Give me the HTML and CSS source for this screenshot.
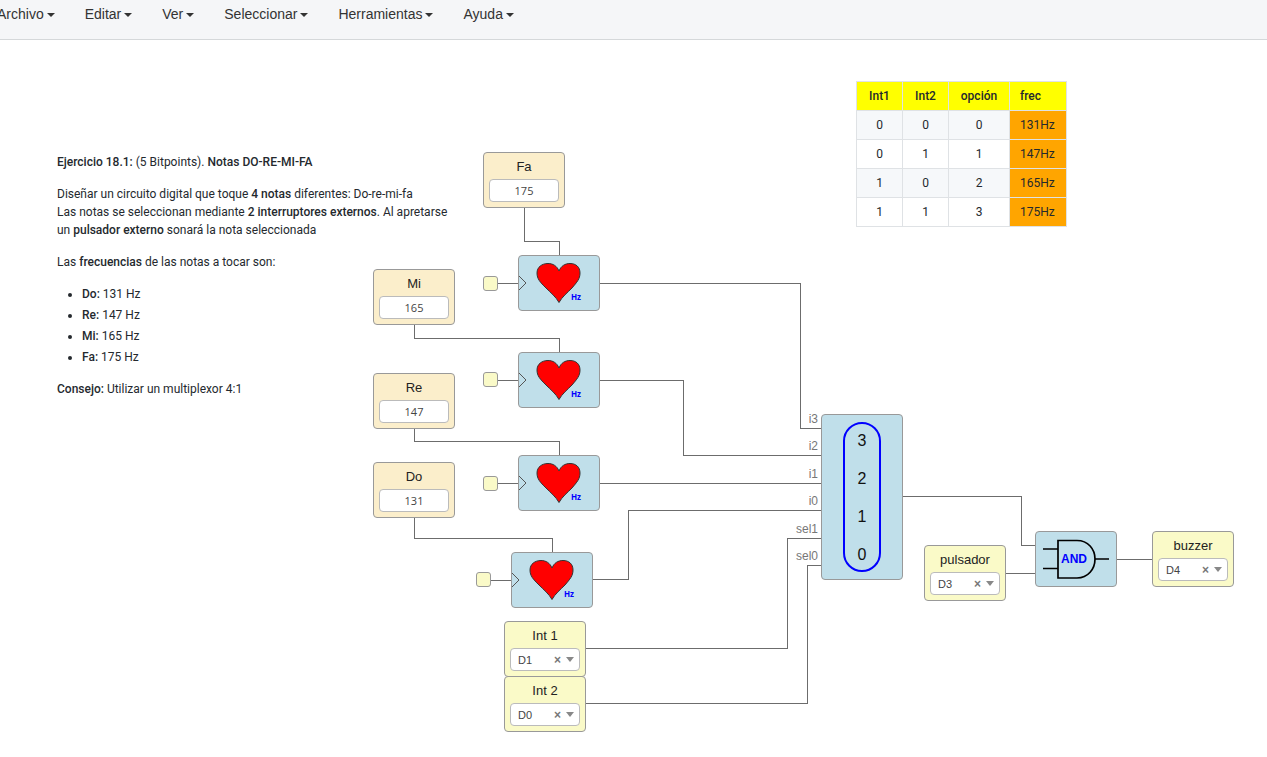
FILE: index.html
```
<!DOCTYPE html>
<html lang="es">
<head>
<meta charset="utf-8">
<title>Ejercicio 18.1</title>
<link rel="stylesheet" href="styles.css">
</head>
<body>
<header class="topbar">
  <nav class="menu">
    <button type="button" class="menu-item">Archivo<span class="caret"></span></button>
    <button type="button" class="menu-item">Editar<span class="caret"></span></button>
    <button type="button" class="menu-item">Ver<span class="caret"></span></button>
    <button type="button" class="menu-item">Seleccionar<span class="caret"></span></button>
    <button type="button" class="menu-item">Herramientas<span class="caret"></span></button>
    <button type="button" class="menu-item">Ayuda<span class="caret"></span></button>
  </nav>
</header>

<svg class="defs" width="0" height="0" aria-hidden="true">
  <symbol id="heart" viewBox="0 0 80 54">
    <path d="M0 20 L7 27 L0 34" fill="none" stroke="#555"/>
    <path d="M40 46.500 C37 41 32 37 27 32 C21 26 18 23 18 17 C18 11 23 7.500 29 7.500 C34 7.500 38 10 40 15 C42 10 46 7.500 51 7.500 C57 7.500 61 11 61 17 C61 23 58 26 53 32 C48 37 43 41 40 46.500 Z" fill="#f00" stroke="#333"/>
  </symbol>
</svg>

<main class="canvas">
  <svg class="wires" aria-hidden="true">
    <g class="wire">
      <path d="M524 168V201H559V215"/>
      <path d="M414 285V298H559V312"/>
      <path d="M414 389V401H559V415"/>
      <path d="M414 478V498H552V512"/>
      <path d="M497 243H518M497 340H518M497 443H518M490 540H511"/>
      <path d="M600 243H800V388H821"/>
      <path d="M600 340H683V415H821"/>
      <path d="M600 443H821"/>
      <path d="M593 539H628V470H821"/>
      <path d="M586 608H787V498H821"/>
      <path d="M586 663H807V525H821"/>
      <path d="M903 456H1021V505H1035"/>
      <path d="M1006 533H1035"/>
      <path d="M1117 519H1152"/>
    </g>
    <g class="port-label">
      <text x="818" y="383">i3</text>
      <text x="818" y="410">i2</text>
      <text x="818" y="438">i1</text>
      <text x="818" y="465">i0</text>
      <text x="818" y="493">sel1</text>
      <text x="818" y="520">sel0</text>
    </g>
  </svg>

  <article class="note">
    <p><strong>Ejercicio 18.1:</strong> (5 Bitpoints). <strong>Notas DO-RE-MI-FA</strong></p>
    <p>Diseñar un circuito digital que toque <strong>4 notas</strong> diferentes: Do-re-mi-fa<br>Las notas se seleccionan mediante <strong>2 interruptores externos</strong>. Al apretarse<br>un <strong>pulsador externo</strong> sonará la nota seleccionada</p>
    <p>Las <strong>frecuencias</strong> de las notas a tocar son:</p>
    <ul>
      <li><strong>Do:</strong> 131 Hz</li>
      <li><strong>Re:</strong> 147 Hz</li>
      <li><strong>Mi:</strong> 165 Hz</li>
      <li><strong>Fa:</strong> 175 Hz</li>
    </ul>
    <p><strong>Consejo:</strong> Utilizar un multiplexor 4:1</p>
  </article>

  <table class="truth">
    <thead>
      <tr><th class="narrow">Int1</th><th class="narrow">Int2</th><th class="wide">opción</th><th class="freq">frec</th></tr>
    </thead>
    <tbody>
      <tr><td>0</td><td>0</td><td>0</td><td class="freq">131Hz</td></tr>
      <tr><td>0</td><td>1</td><td>1</td><td class="freq">147Hz</td></tr>
      <tr><td>1</td><td>0</td><td>2</td><td class="freq">165Hz</td></tr>
      <tr><td>1</td><td>1</td><td>3</td><td class="freq">175Hz</td></tr>
    </tbody>
  </table>

  <div class="node constant at-fa"><label for="fa">Fa</label><input id="fa" class="field" type="text" value="175"></div>
  <div class="node constant at-mi"><label for="mi">Mi</label><input id="mi" class="field" type="text" value="165"></div>
  <div class="node constant at-re"><label for="re">Re</label><input id="re" class="field" type="text" value="147"></div>
  <div class="node constant at-do"><label for="do">Do</label><input id="do" class="field" type="text" value="131"></div>

  <div class="port at-port-fa"></div>
  <div class="port at-port-mi"></div>
  <div class="port at-port-re"></div>
  <div class="port at-port-do"></div>

  <div class="node block at-heart-fa"><svg class="drawing" viewBox="0 0 80 54"><use href="#heart"/><text class="hz" x="52" y="44">Hz</text></svg></div>
  <div class="node block at-heart-mi"><svg class="drawing" viewBox="0 0 80 54"><use href="#heart"/><text class="hz" x="52" y="44">Hz</text></svg></div>
  <div class="node block at-heart-re"><svg class="drawing" viewBox="0 0 80 54"><use href="#heart"/><text class="hz" x="52" y="44">Hz</text></svg></div>
  <div class="node block at-heart-do"><svg class="drawing" viewBox="0 0 80 54"><use href="#heart"/><text class="hz" x="52" y="44">Hz</text></svg></div>

  <div class="node block mux at-mux">
    <div class="mux-ring"><span>3</span><span>2</span><span>1</span><span>0</span></div>
  </div>

  <div class="node block at-and">
    <svg class="drawing" viewBox="0 0 80 54">
      <path d="M7 17H22M7 36.500H22M59 27H73M22 8.500H41C52 8.500 59 17 59 27C59 37 52 46 41 46H22Z" fill="none" stroke="#000" stroke-width="1.700"/>
      <text class="and-text" x="38" y="31">AND</text>
    </svg>
  </div>

  <div class="node pin at-int1">
    <label for="int1">Int 1</label>
    <div class="field picker"><select id="int1"><option>D1</option></select><button type="button" class="clear" aria-label="Quitar">×</button><span class="arrow"></span></div>
  </div>
  <div class="node pin at-int2">
    <label for="int2">Int 2</label>
    <div class="field picker"><select id="int2"><option>D0</option></select><button type="button" class="clear" aria-label="Quitar">×</button><span class="arrow"></span></div>
  </div>
  <div class="node pin at-pulsador">
    <label for="pulsador">pulsador</label>
    <div class="field picker"><select id="pulsador"><option>D3</option></select><button type="button" class="clear" aria-label="Quitar">×</button><span class="arrow"></span></div>
  </div>
  <div class="node pin at-buzzer">
    <label for="buzzer">buzzer</label>
    <div class="field picker"><select id="buzzer"><option>D4</option></select><button type="button" class="clear" aria-label="Quitar">×</button><span class="arrow"></span></div>
  </div>
</main>
</body>
</html>
```
FILE: styles.css
```
* { box-sizing: border-box; }

body {
  margin: 0;
  min-height: 100vh;
  display: flex;
  flex-direction: column;
  overflow: hidden;
  background: #fff;
  color: #24292e;
  font: 12px/18px Roboto, "Open Sans", sans-serif;
}

button, input, select {
  margin: 0;
  padding: 0;
  border: 0;
  background: none;
  color: inherit;
  font: inherit;
}

/* Menu bar */
.topbar {
  background: #f5f6f8;
  border-bottom: 1px solid #d5d8da;
  padding-bottom: 10px;
}
.menu { display: flex; margin-left: -18px; }
.menu-item {
  display: flex;
  align-items: center;
  gap: 3px;
  padding: 5px 15px;
  color: #333;
  font: 14px/19px "Liberation Sans", Arial, sans-serif;
}
.caret {
  border: 4px solid transparent;
  border-top-color: #333;
  border-bottom: 0;
}

.defs { position: absolute; }

/* Circuit canvas */
.canvas { position: relative; flex: 1; }
.wires {
  position: absolute;
  left: 0;
  top: 0;
  width: 100%;
  height: 100%;
  overflow: visible;
}
.wire path {
  fill: none;
  stroke: #6c6c6c;
  stroke-width: 1;
  shape-rendering: crispEdges;
}
.port-label text {
  fill: #777;
  font: 12px "Liberation Sans", Arial, sans-serif;
  text-anchor: end;
}

/* Statement */
.note { position: absolute; left: 57px; top: 113px; white-space: nowrap; }
.note p { margin: 0 0 14px; }
.note ul { margin: 0 0 14px; padding-left: 25px; }
.note li + li { margin-top: 3px; }
.note strong { font-weight: 500; }

/* Truth table */
.truth {
  position: absolute;
  left: 856px;
  top: 41px;
  border-collapse: collapse;
  text-align: center;
}
.truth th, .truth td { padding: 5px 10px; border: 1px solid #dfe2e5; }
.truth th { background: #ff0; font-weight: 500; }
.truth .narrow { width: 46px; }
.truth .wide { width: 61px; }
.truth tbody tr:nth-child(odd) { background: #f6f8fa; }
.truth .freq { width: 57px; text-align: left; }
.truth td.freq { background: #ffa500; }

/* Nodes */
.node {
  position: absolute;
  width: 82px;
  height: 56px;
  border: 1px solid #999;
  border-radius: 4px;
  display: flex;
  flex-direction: column;
  align-items: center;
}
.constant { background: #fbeecb; }
.pin { background: #fafac8; }
.block { background: #c0dfea; }
.node label {
  padding: 5px 0 3px;
  color: #222;
  font: 13px/18px "Liberation Sans", Arial, sans-serif;
}
.field {
  width: 70px;
  height: 23px;
  border: 1px solid #bbb;
  border-radius: 4px;
  background: #fff;
  color: #444;
  font: 11px "Open Sans", "Noto Sans", sans-serif;
  text-align: center;
}
.picker { display: flex; align-items: center; padding: 0 5px 0 7px; }
.picker select { flex: 1; min-width: 0; appearance: none; font: 11px "Liberation Sans", Arial, sans-serif; }
.clear { color: #777; font: bold 12px/16px "Liberation Sans", Arial, sans-serif; margin-right: 5px; }
.arrow { border: 4px solid transparent; border-top: 5px solid #888; border-bottom: 0; }

.drawing { width: 100%; height: 100%; display: block; }
.hz { fill: #00f; font: 700 8px "Open Sans", sans-serif; }
.and-text { fill: #00f; font: 700 12px "Liberation Sans", Arial, sans-serif; text-anchor: middle; }

.port {
  position: absolute;
  width: 15px;
  height: 15px;
  border: 1px solid #999;
  border-radius: 3px;
  background: #fafac8;
}

.mux { height: 166px; padding: 7px 0; }
.mux-ring {
  flex: 1;
  width: 38px;
  border: 2px solid #00f;
  border-radius: 19px;
  display: flex;
  flex-direction: column;
  justify-content: space-between;
  align-items: center;
  padding: 8px 0 6px;
  color: #111;
  font: 16px/18px "Liberation Sans", Arial, sans-serif;
}

/* Node places on the canvas */
.at-fa { left: 483px; top: 112px; }
.at-mi { left: 373px; top: 229px; }
.at-re { left: 373px; top: 333px; }
.at-do { left: 373px; top: 422px; }
.at-port-fa { left: 483px; top: 236px; }
.at-port-mi { left: 483px; top: 332px; }
.at-port-re { left: 483px; top: 436px; }
.at-port-do { left: 476px; top: 532px; }
.at-heart-fa { left: 518px; top: 215px; }
.at-heart-mi { left: 518px; top: 312px; }
.at-heart-re { left: 518px; top: 415px; }
.at-heart-do { left: 511px; top: 512px; }
.at-mux { left: 821px; top: 374px; }
.at-and { left: 1035px; top: 491px; }
.at-int1 { left: 504px; top: 581px; }
.at-int2 { left: 504px; top: 636px; }
.at-pulsador { left: 924px; top: 505px; }
.at-buzzer { left: 1152px; top: 491px; }
```
